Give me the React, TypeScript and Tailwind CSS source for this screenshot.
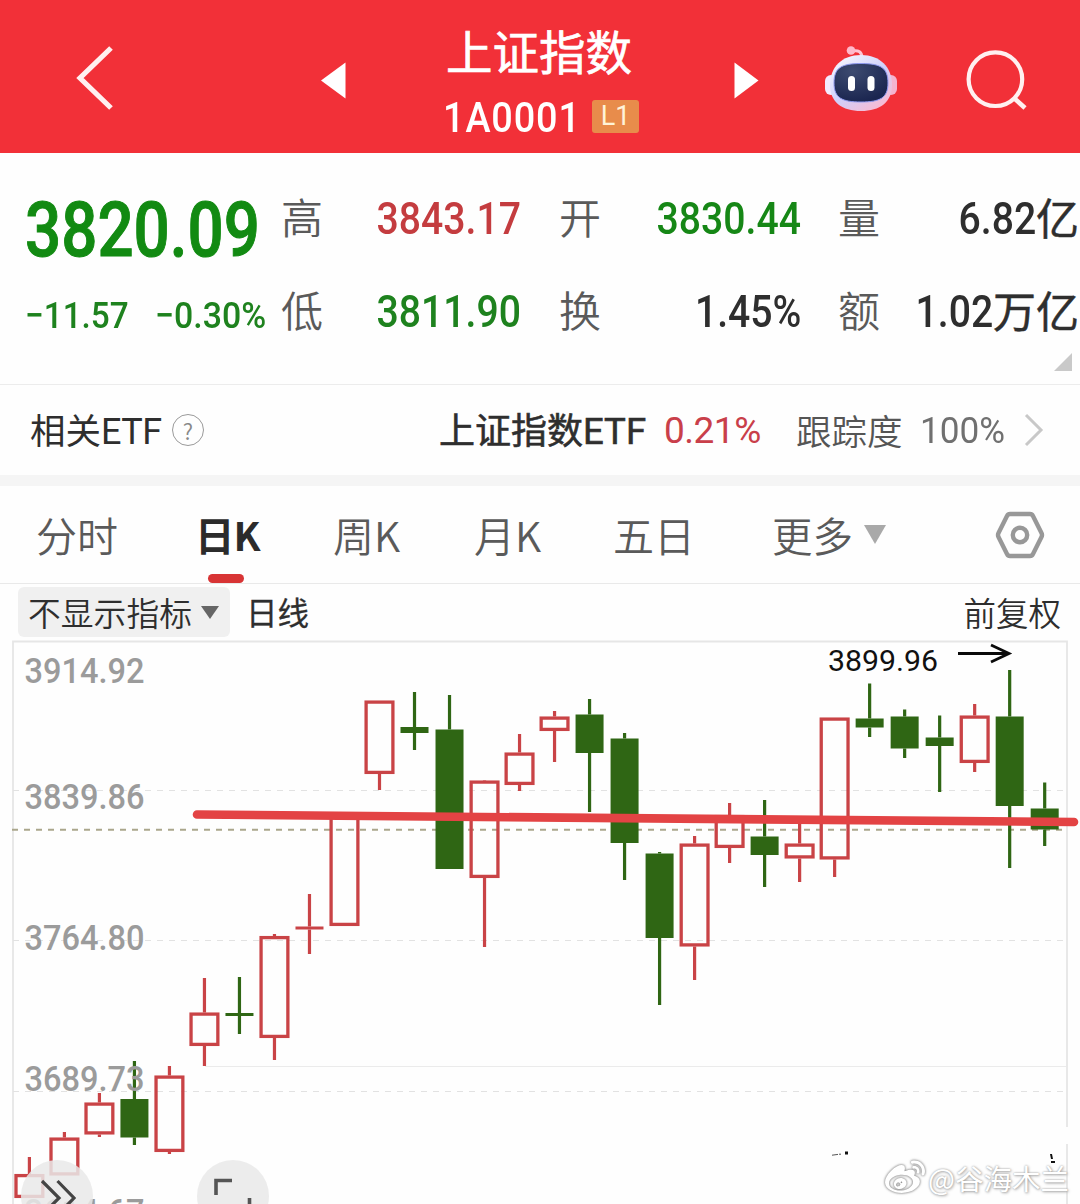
import clsx from 'clsx'
import { FaWeibo } from 'react-icons/fa'

type Candle = {
  up: boolean
  top: number
  bottom: number
  high: number
  low: number
}

const UP = '#c94346'
const DOWN = '#2f6614'
const STEP = 35.01
const FIRST_X = 29.4
const CHART_TOP = 638

// Screen-space candles, oldest first
const candles: Candle[] = [
  { up: true, top: 1174, bottom: 1198, high: 1157, low: 1198 },
  { up: true, top: 1137.5, bottom: 1175.5, high: 1132, low: 1175 },
  { up: true, top: 1102.5, bottom: 1134.5, high: 1093, low: 1137 },
  { up: false, top: 1099, bottom: 1137.5, high: 1061, low: 1145 },
  { up: true, top: 1075.5, bottom: 1152, high: 1066, low: 1154 },
  { up: true, top: 1012.5, bottom: 1046, high: 978, low: 1066 },
  { up: false, top: 1013, bottom: 1016, high: 977, low: 1034 },
  { up: true, top: 936, bottom: 1038, high: 934, low: 1060 },
  { up: true, top: 926.5, bottom: 929.5, high: 894, low: 954 },
  { up: true, top: 815, bottom: 926, high: 815, low: 926 },
  { up: true, top: 700.5, bottom: 774, high: 700.5, low: 790 },
  { up: false, top: 727, bottom: 733, high: 692, low: 750 },
  { up: false, top: 729.5, bottom: 869, high: 695, low: 869 },
  { up: true, top: 780.5, bottom: 878, high: 780, low: 947 },
  { up: true, top: 752.5, bottom: 785, high: 734, low: 791 },
  { up: true, top: 716.5, bottom: 731, high: 711, low: 762 },
  { up: false, top: 714.5, bottom: 753, high: 699, low: 812 },
  { up: false, top: 738.5, bottom: 843, high: 733, low: 880 },
  { up: false, top: 853.5, bottom: 938, high: 852, low: 1005 },
  { up: true, top: 843.5, bottom: 946.5, high: 836, low: 980 },
  { up: true, top: 815, bottom: 848, high: 803, low: 863 },
  { up: false, top: 836.5, bottom: 855, high: 800, low: 887 },
  { up: true, top: 843.5, bottom: 858.5, high: 820, low: 882 },
  { up: true, top: 717.5, bottom: 859.5, high: 717.5, low: 877 },
  { up: false, top: 718.5, bottom: 727.5, high: 683.5, low: 737 },
  { up: false, top: 716.5, bottom: 748.5, high: 709.5, low: 758 },
  { up: false, top: 737.5, bottom: 746, high: 715.5, low: 792 },
  { up: true, top: 715.5, bottom: 763, high: 704, low: 772 },
  { up: false, top: 716.5, bottom: 806, high: 670, low: 868 },
  { up: false, top: 808.5, bottom: 829.5, high: 782.5, low: 846 },
]

const priceLabels = [
  { text: '3914.92', y: 683 },
  { text: '3839.86', y: 808.5 },
  { text: '3764.80', y: 949.5 },
  { text: '3689.73', y: 1091 },
  { text: '3614.67', y: 1224 },
]

const tabs = [
  { label: '分时', className: 'w-[161px]' },
  { label: '日K', className: 'w-[136px]', active: true },
  { label: '周K', className: 'w-[141px]' },
  { label: '月K', className: 'w-[139px]' },
  { label: '五日', className: 'w-[159px]' },
]

function Header() {
  return (
    <header className="flex h-[153px] items-start bg-[#f23038] text-white">
      <svg className="ml-[75px] mt-[45px] h-[66px] w-[40px] shrink-0" viewBox="0 0 40 66" fill="none" stroke="#fff0f0" strokeWidth="5.2">
        <path d="M36 3 L5 33 L36 63" />
      </svg>
      <svg className="ml-[206px] mt-[62px] h-[37px] w-[25px] shrink-0" viewBox="0 0 25 37" fill="white">
        <path d="M0 18.5 L24.5 0.5 V36.5Z" />
      </svg>

      <div className="ml-[95px] w-[204px] shrink-0 pt-[23px]">
        <h1 className="ml-[5px] whitespace-nowrap text-[46.5px] leading-[54px] [-webkit-text-stroke:0.7px]">上证指数</h1>
        <div className="flex h-[55px] pt-[15px]">
          <span className="ml-[2px] w-[149px] origin-left scale-x-[0.9] whitespace-nowrap pt-[5px] font-['Roboto'] text-[42px] leading-[42px] tracking-[1px] font-medium">
            1A0001
          </span>
          <span className="mt-[8px] flex h-[33px] w-[47px] items-center justify-center rounded-[3px] bg-[#e88c4b] font-['Roboto'] text-[27px] leading-none text-[#fff3d8]">
            L1
          </span>
        </div>
      </div>

      <svg className="ml-[89px] mt-[62px] h-[37px] w-[25px] shrink-0" viewBox="0 0 25 37" fill="white">
        <path d="M24.5 18.5 L0.5 0.5 V36.5Z" />
      </svg>
      <Robot />
      <svg className="ml-[67px] mt-[48px] h-[64px] w-[64px] shrink-0" viewBox="0 0 64 64" fill="none" stroke="#fff0f0" strokeWidth="4.2">
        <circle cx="30.4" cy="31.2" r="26.8" />
        <path d="M49 50 L60 60" strokeWidth="4.6" />
      </svg>
    </header>
  )
}

function Robot() {
  return (
    <svg className="ml-[65px] mt-[43px] h-[70px] w-[74px] shrink-0" viewBox="0 0 74 70">
      <defs>
        <linearGradient id="shell" x1="0.1" y1="0.1" x2="0.8" y2="1">
          <stop offset="0" stopColor="#f4f5ff" />
          <stop offset="0.5" stopColor="#cfd0fb" />
          <stop offset="1" stopColor="#fbb9d0" />
        </linearGradient>
        <radialGradient id="face" cx="0.35" cy="0.2" r="0.8">
          <stop offset="0" stopColor="#3d4b70" />
          <stop offset="1" stopColor="#1b2650" />
        </radialGradient>
      </defs>
      <path d="M28 8 Q38 6 38 15" fill="none" stroke="#ffc4d4" strokeWidth="3" />
      <circle cx="27" cy="7.5" r="4.3" fill="#ffb9cb" />
      <rect x="1" y="32" width="12" height="20" rx="6" fill="#f3ebff" />
      <rect x="61" y="32" width="12" height="20" rx="6" fill="#f4b3cf" />
      <path d="M37 12 C56 12 68 24 68 42 C68 59 56 68 37 68 C18 68 6 59 6 42 C6 24 18 12 37 12Z" fill="url(#shell)" />
      <path d="M37 20.5 C57 20.5 64 25 64 40 C64 55 56 59 37 59 C18 59 10 55 10 40 C10 25 17 20.5 37 20.5Z" fill="url(#face)" stroke="#8f9af0" strokeWidth="1" />
      <rect x="24" y="33" width="7" height="15" rx="3.5" fill="white" />
      <rect x="43.5" y="33" width="7" height="15" rx="3.5" fill="white" />
    </svg>
  )
}

type StatProps = {
  label: string
  value: string
  unit?: string
  color: string
}

function Stat({ label, value, unit, color }: StatProps) {
  return (
    <div className={clsx('flex h-[93px] items-center whitespace-nowrap leading-none', color)}>
      <span className="pb-[5px] text-[42px] font-[350] text-[#5a5a5a]">{label}</span>
      <span className="ml-auto origin-right scale-x-[0.87] font-['Roboto'] text-[45px] font-medium">{value}</span>
      {unit && <span className="pb-[5px] text-[43px] [-webkit-text-stroke:0.5px]">{unit}</span>}
    </div>
  )
}

function Quote() {
  return (
    <section className="flex h-[231px] pt-[19px]">
      <div className="w-[281px] shrink-0 pl-[25px] font-['Roboto'] text-[#128a12]">
        <div className="w-[240px] origin-left scale-x-[0.838] whitespace-nowrap pt-[20px] text-[76px] leading-[76px] font-medium [-webkit-text-stroke:1px]">
          3820.09
        </div>
        <div className="flex pt-[29px] text-[37px] leading-[37px] font-medium text-[#1e821e]">
          <span className="w-[130px] origin-left scale-x-[0.9] whitespace-nowrap">−11.57</span>
          <span className="origin-left scale-x-[0.915] whitespace-nowrap">−0.30%</span>
        </div>
      </div>

      <div className="w-[240px] shrink-0">
        <Stat label="高" value="3843.17" color="text-[#c43c3f]" />
        <Stat label="低" value="3811.90" color="text-[#1e821e]" />
      </div>
      <div className="ml-[38px] w-[242px] shrink-0">
        <Stat label="开" value="3830.44" color="text-[#168716]" />
        <Stat label="换" value="1.45%" color="text-[#2e2e2e]" />
      </div>
      <div className="ml-[37px] w-[241px] shrink-0">
        <Stat label="量" value="6.82" unit="亿" color="text-[#2e2e2e]" />
        <Stat label="额" value="1.02" unit="万亿" color="text-[#2e2e2e]" />
        <svg className="ml-auto mr-[7px] mt-[-5px] h-[18px] w-[18px]" viewBox="0 0 18 18" fill="#c9c9c9">
          <path d="M18 0 V18 H0Z" />
        </svg>
      </div>
    </section>
  )
}

function EtfRow() {
  return (
    <section className="flex h-[91px] items-center border-t border-[#ececec] pb-[1px] whitespace-nowrap text-[#2e2e2e]">
      <span className="ml-[30px] w-[142px] pt-[2px] text-[35.5px] leading-none">相关<span className="font-['Roboto'] text-[36px] tracking-[-0.5px]">ETF</span></span>
      <span className="flex h-[32px] w-[32px] items-center justify-center rounded-full border-[1.5px] border-[#9a9a9a] text-[22px] leading-none font-[350] text-[#888]">?</span>
      <span className="ml-[235px] w-[225px] pt-[2px] text-[36px] leading-none [-webkit-text-stroke:0.6px]">上证指数<span className="font-['Roboto'] text-[36.5px]">ETF</span></span>
      <span className="w-[132px] pt-[2px] font-['Roboto'] text-[37px] leading-none tracking-[-0.5px] text-[#c93f4a]">0.21%</span>
      <span className="w-[124px] text-[35.5px] leading-none font-[350] text-[#555]">跟踪度</span>
      <span className="w-[104px] origin-left scale-x-[0.95] pt-[2px] font-['Roboto'] text-[37px] leading-none text-[#707070]">100%</span>
      <svg className="h-[34px] w-[20px]" viewBox="0 0 20 34" fill="none" stroke="#c8c8c8" strokeWidth="3">
        <path d="M2 2 L17 17 L2 32" />
      </svg>
    </section>
  )
}

function PeriodTabs() {
  return (
    <nav className="flex h-[98px] items-center border-b border-[#e9e9e9] pl-[36px] whitespace-nowrap text-[#5a5a5a]">
      {tabs.map(tab => (
        <div key={tab.label} className={clsx('flex h-full shrink-0 flex-col', tab.className)}>
          <span className={clsx('h-[70px] pt-[26px] leading-[44px]', tab.active ? 'ml-[-2px] text-[39.5px] tracking-[-1px] font-bold text-[#2b2b2b]' : 'text-[41px] font-[350]')}>
            {tab.label}
          </span>
          {tab.active && <span className="ml-[11px] mt-[18px] h-[9px] w-[36px] rounded-full bg-[#d83435]" />}
        </div>
      ))}
      <span className="pt-[1px] text-[40.5px] leading-none font-[350]">更多</span>
      <svg className="ml-[11px] h-[19px] w-[22px]" viewBox="0 0 22 19" fill="#a9a9a9">
        <path d="M0 0 H22 L11 19Z" />
      </svg>
      <svg className="ml-[109px] h-[48px] w-[50px]" viewBox="0 0 50 48" fill="none" stroke="#989898" strokeWidth="4.4" strokeLinejoin="round">
        <path d="M15 3 H35 Q37 3 38 5 L46.5 22 Q47.5 24 46.5 26 L38 43 Q37 45 35 45 H15 Q13 45 12 43 L3.5 26 Q2.5 24 3.5 22 L12 5 Q13 3 15 3Z" />
        <circle cx="25" cy="24" r="7.2" />
      </svg>
    </nav>
  )
}

function ChartToolbar() {
  return (
    <div className="flex h-[54px] items-center whitespace-nowrap pl-[18px] pr-[19px] text-[#2e2e2e]">
      <div className="flex h-[50px] w-[212px] items-center rounded-[6px] bg-[#f0f0f0] pl-[10px]">
        <span className="text-[32.8px] leading-none font-[350]">不显示指标</span>
        <svg className="ml-[9px] h-[13px] w-[18px]" viewBox="0 0 18 13" fill="#666">
          <path d="M0 0 H18 L9 13Z" />
        </svg>
      </div>
      <span className="ml-[16px] text-[31.5px] leading-none [-webkit-text-stroke:0.3px]">日线</span>
      <span className="ml-auto text-[32.5px] leading-none font-[350]">前复权</span>
    </div>
  )
}

function CandleMark({ candle, x }: { candle: Candle; x: number }) {
  const { up, top, bottom, high, low } = candle
  const color = up ? UP : DOWN
  const hollow = up && bottom - top > 6

  return (
    <g>
      {high < top && <rect x={x - 1.6} y={high} width={3.2} height={top - high} fill={color} />}
      {low > bottom && <rect x={x - 1.6} y={bottom} width={3.2} height={low - bottom} fill={color} />}
      {hollow ? (
        <rect x={x - 13.4} y={top + 1.6} width={26.8} height={bottom - top - 3.2} fill="none" stroke={color} strokeWidth={3.3} />
      ) : (
        <rect x={x - 14} y={top} width={28} height={bottom - top} fill={color} />
      )}
    </g>
  )
}

function Chart() {
  return (
    <svg className="block h-[566px] w-[1080px]" viewBox={`0 ${CHART_TOP} 1080 566`}>
      {/* Frame */}
      <path d="M13 1204 V641.5 H1067 V1127 M1067 1144 V1204" fill="none" stroke="#e6e6e6" strokeWidth="1.8" />
      <path d="M205 1066.5 H1066" stroke="#ebebeb" strokeWidth="1.2" />

      {/* Grid */}
      {[790.5, 940.5, 1091.5].map(y => (
        <path key={y} d={`M13 ${y} H1066`} stroke="#e2e2e2" strokeWidth="1.2" strokeDasharray="6 6" />
      ))}
      <path d="M12 829.8 H1064" stroke="#aaa68c" strokeWidth="2" strokeDasharray="6 6" />

      {candles.map((candle, i) => (
        <CandleMark key={i} candle={candle} x={FIRST_X + i * STEP} />
      ))}

      {/* Price axis */}
      {priceLabels.map(({ text, y }) => (
        <text key={text} x="24.5" y={y} textLength="120" lengthAdjust="spacingAndGlyphs" fill="#9b9b9b" fontFamily="Roboto" fontSize="35" fontWeight="500">
          {text}
        </text>
      ))}

      {/* Period high */}
      <text x="828" y="670.5" textLength="110" lengthAdjust="spacingAndGlyphs" fill="#111" fontFamily="Roboto" fontSize="29">3899.96</text>
      <path d="M958 653.5 H1008 M991 645 L1009 653.5 L991 662" fill="none" stroke="#0a0a0a" strokeWidth="2.8" />

      {/* Drawn resistance line */}
      <path d="M197 814.5 L1074 822" stroke="#e34344" strokeWidth="8.6" strokeLinecap="round" />

      <path d="M832 1155.2 L838 1154.4 M839 1154.2 H841" stroke="#555" strokeWidth="1" />
      <path d="M845 1151.5 h3 v3 h-3Z M1050 1154 l2 0 l1 5 h-2Z M1051 1161 h4 v2 h-4Z" fill="#111" />
    </svg>
  )
}

export default function App() {
  return (
    <div className="relative h-[1204px] w-[1080px] overflow-hidden bg-[#fefefe] font-['Noto_Sans_CJK_SC',sans-serif]">
      <Header />
      <Quote />
      <EtfRow />
      <div className="h-[11px] bg-[#f5f5f5]" />
      <PeriodTabs />
      <div className="h-[1px]" />
      <ChartToolbar />
      <div className="mt-[-1px]">
        <Chart />
      </div>

      {/* Floating chart controls */}
      <button className="absolute left-[21px] top-[1160px] h-[72px] w-[72px] rounded-full bg-[#e9e9e9]/85">
        <svg className="h-full w-full" viewBox="0 0 72 72" fill="none" stroke="#444" strokeWidth="3.2">
          <path d="M21 21 L38 38 L21 55 M36.5 21 L53 38 L36.5 55" />
        </svg>
      </button>
      <button className="absolute left-[197px] top-[1160px] h-[72px] w-[72px] rounded-full bg-[#e9e9e9]/85">
        <svg className="h-full w-full" viewBox="0 0 72 72" fill="none" stroke="#555" strokeWidth="3.6">
          <path d="M19 35 V20.5 H35 M52.5 38 V53 H37" />
        </svg>
      </button>

      {/* Watermark */}
      <div className="absolute left-[885px] top-[1158px] flex items-center whitespace-nowrap text-white">
        <FaWeibo className="h-[40px] w-[40px] [filter:drop-shadow(0_0_1px_#888)_drop-shadow(0_0_1px_#bbb)]" />
        <span className="ml-[3px] text-[28.5px] leading-[40px] [text-shadow:0_0_2px_#999,1px_1px_3px_#aaa]">@谷海木兰</span>
      </div>
    </div>
  )
}
